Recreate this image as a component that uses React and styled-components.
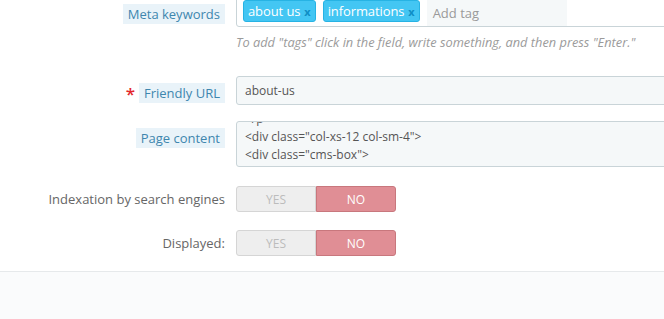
import React from "react";
import styled, { createGlobalStyle } from "styled-components";

const Global = createGlobalStyle`
  html, body {
    margin: 0;
    padding: 0;
    background: #fafbfc;
    overflow: hidden;
    font-family: "Open Sans", "Liberation Sans", sans-serif;
  }
`;

const Panel = styled.div`
  background: #fff;
  margin-top: -4px;
  padding-bottom: 15px;
  border-bottom: 1px solid #e6e9eb;
`;

const Row = styled.div`
  display: grid;
  grid-template-columns: 225px 480px;
  column-gap: 11px;
  align-items: start;
  margin-top: ${(p) => p.$top || 0}px;
`;

const LabelCell = styled.div`
  display: flex;
  justify-content: flex-end;
  align-items: center;
  padding-top: ${(p) => (p.$plain ? 3 : 7)}px;
`;

const Required = styled.span`
  color: #e3262b;
  font-size: 17px;
  font-weight: 600;
  line-height: 14px;
  margin-right: 4px;
  margin-top: 2px;
`;

const TipLabel = styled.span`
  background: #e9f3f9;
  color: #3e86ae;
  font-size: 13px;
  line-height: 20px;
  padding: 0 5px;
`;

const PlainLabel = styled.span`
  color: #666;
  font-size: 13px;
  line-height: 20px;
`;

const TagBox = styled.div`
  display: flex;
  align-items: flex-start;
  gap: 7px;
  border: 1px solid #c9d4d8;
  border-radius: 3px;
  padding: 3px 6px 0;
  background: #fff;
`;

const Tag = styled.span`
  display: inline-flex;
  align-items: center;
  height: 22px;
  padding: 0 4px;
  background: #43c6f3;
  border: 1px solid #27b3e4;
  border-radius: 3px;
  color: #fff;
  font-size: 13px;
  letter-spacing: -0.1px;
  box-sizing: border-box;
`;

const TagX = styled.span`
  color: #0f8ec5;
  font-weight: 700;
  font-size: 11px;
  margin-left: 4px;
`;

const TagInput = styled.span`
  width: 134px;
  height: 26px;
  padding-left: 6px;
  background: #f5f8f9;
  color: #9a9a9a;
  font-size: 13px;
  line-height: 26px;
`;

const Help = styled.div`
  margin-top: 7px;
  color: #9b9b9b;
  font-size: 12.8px;
  font-style: italic;
  line-height: 17px;
`;

const Input = styled.div`
  height: 29px;
  box-sizing: border-box;
  border: 1px solid #c9d4d8;
  border-radius: 3px;
  background: #f5f8f9;
  color: #555;
  font-size: 12px;
  line-height: 27px;
  padding: 0 8px;
`;

const TextArea = styled.div`
  height: 46px;
  box-sizing: border-box;
  border: 1px solid #c9d4d8;
  border-radius: 3px;
  background: #f5f8f9;
  overflow: hidden;
  padding: 0 8px;
`;

const CodeLines = styled.div`
  margin-top: -12px;
  color: #555;
  font-size: 12px;
  line-height: 18px;
  white-space: pre;
`;

const Switch = styled.div`
  display: flex;
  width: 160px;
  height: 26px;
`;

const SwitchHalf = styled.div`
  flex: 1;
  display: flex;
  align-items: center;
  justify-content: center;
  font-size: 12px;
  box-sizing: border-box;
  border: 1px solid ${(p) => (p.$on ? "#c8777d" : "#d5d5d5")};
  background: ${(p) => (p.$on ? "#e08e95" : "#eeeeee")};
  color: ${(p) => (p.$on ? "#fff" : "#bcbcbc")};
  border-radius: ${(p) => (p.$on ? "0 3px 3px 0" : "3px 0 0 3px")};
`;

const code = [
  "</p>",
  '<div class="col-xs-12 col-sm-4">',
  '<div class="cms-box">',
  '<h3 class="page-subheading">Our company</h3>',
];

function Toggle() {
  return (
    <Switch>
      <SwitchHalf>YES</SwitchHalf>
      <SwitchHalf $on>NO</SwitchHalf>
    </Switch>
  );
}

export default function App() {
  return (
    <>
      <Global />
      <Panel>
        <Row>
          <LabelCell style={{ paddingTop: 8 }}>
            <TipLabel>Meta keywords</TipLabel>
          </LabelCell>
          <div>
            <TagBox>
              <Tag>
                about us<TagX>x</TagX>
              </Tag>
              <Tag>
                informations<TagX>x</TagX>
              </Tag>
              <TagInput>Add tag</TagInput>
            </TagBox>
            <Help>
              To add "tags" click in the field, write something, and then press
              "Enter."
            </Help>
          </div>
        </Row>
        <Row $top={25}>
          <LabelCell>
            <Required>*</Required>
            <TipLabel>Friendly URL</TipLabel>
          </LabelCell>
          <Input>about-us</Input>
        </Row>
        <Row $top={16}>
          <LabelCell>
            <TipLabel>Page content</TipLabel>
          </LabelCell>
          <TextArea>
            <CodeLines>
              {code.map((line) => (
                <div key={line}>{line}</div>
              ))}
            </CodeLines>
          </TextArea>
        </Row>
        <Row $top={19}>
          <LabelCell $plain>
            <PlainLabel>Indexation by search engines</PlainLabel>
          </LabelCell>
          <Toggle />
        </Row>
        <Row $top={18}>
          <LabelCell $plain>
            <PlainLabel>Displayed:</PlainLabel>
          </LabelCell>
          <Toggle />
        </Row>
      </Panel>
    </>
  );
}
